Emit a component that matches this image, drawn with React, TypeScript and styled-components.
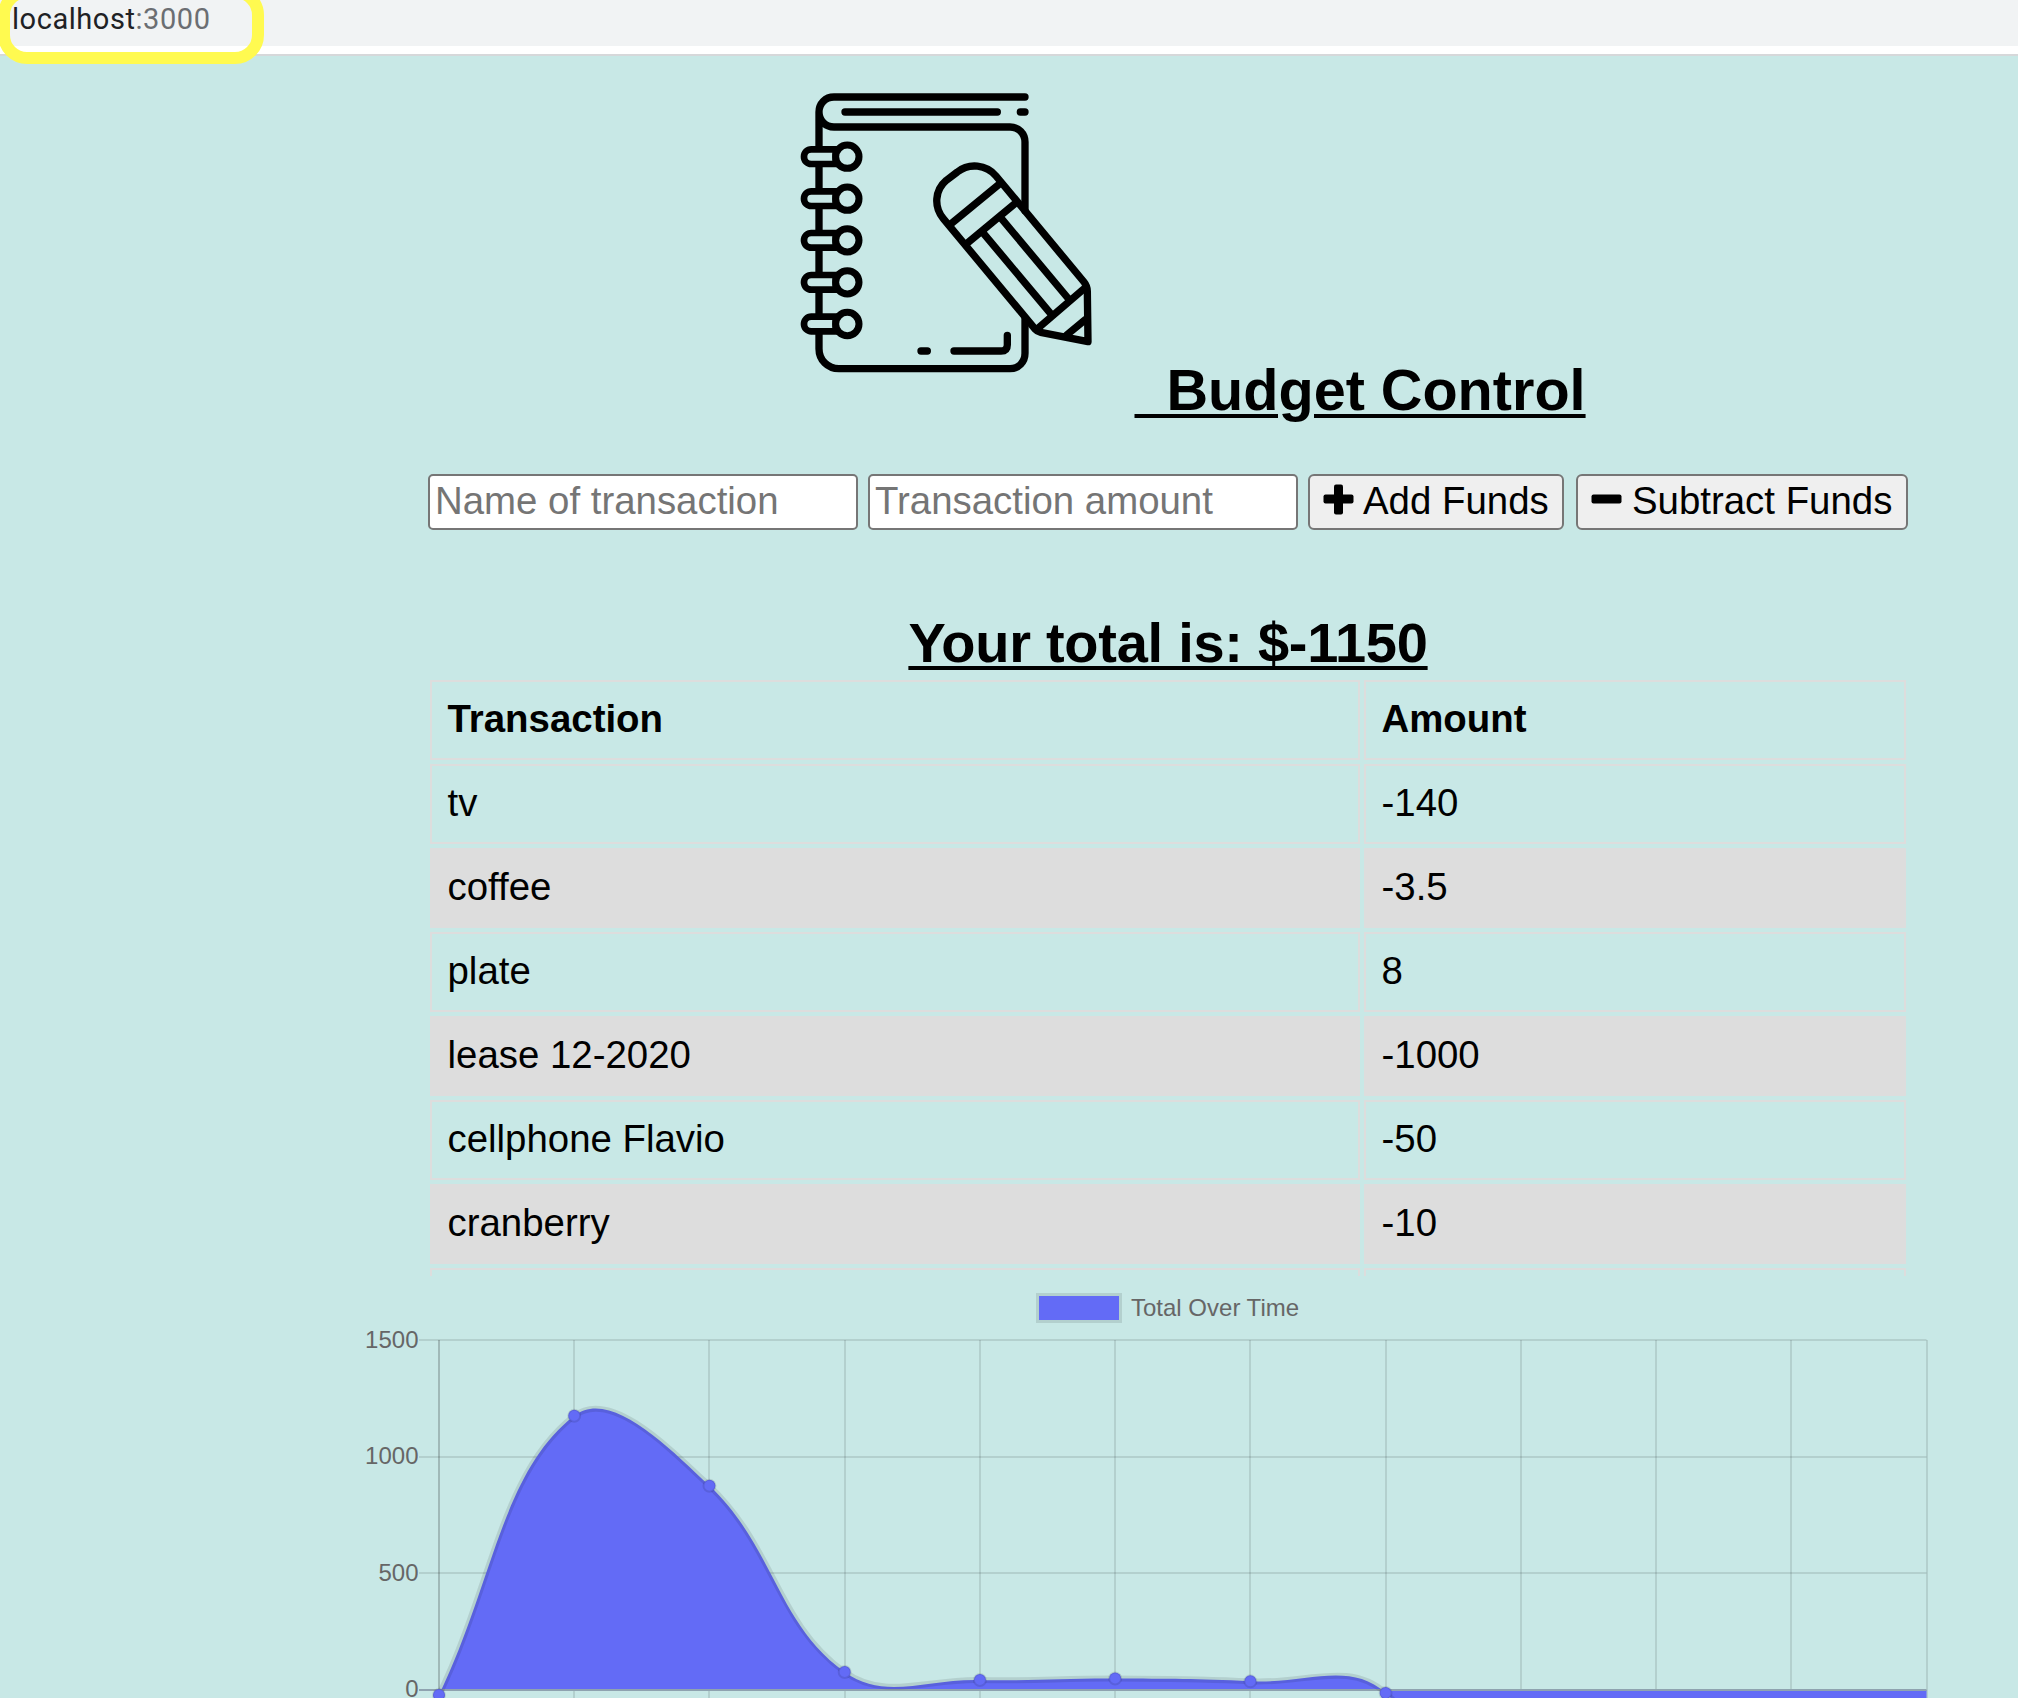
import React from "react";
import styled, { createGlobalStyle } from "styled-components";

const Global = createGlobalStyle`
  html, body { margin: 0; padding: 0; background: #c8e8e6; overflow: hidden; }
  * { box-sizing: border-box; }
`;

const Page = styled.div`
  width: 2018px;
  height: 1698px;
  overflow: hidden;
  background: #c8e8e6;
  color: #000;
  font-family: "Liberation Sans", Arial, Helvetica, sans-serif;
  font-size: 38.4px;
  display: flex;
  flex-direction: column;
`;

const BrowserBar = styled.div`
  position: relative;
  flex: none;
  height: 56px;
  background: #f1f3f4;
  border-bottom: 2px solid #d6d8da;
  box-shadow: inset 0 -8px 0 #fff;
`;

const Address = styled.div`
  padding: 2px 0 0 12px;
  font-family: Roboto, sans-serif;
  font-size: 29px;
  line-height: 34px;
  letter-spacing: 0.55px;
  color: #202124;
`;

const Port = styled.span`
  color: #6b6e72;
`;

const Highlight = styled.div`
  position: absolute;
  left: -2px;
  top: -14px;
  width: 266px;
  height: 78px;
  border: 12px solid #fffa50;
  border-radius: 29px;
`;

const Header = styled.header`
  flex: none;
  display: flex;
  align-items: flex-end;
  height: 369px;
  padding-left: 780px;
`;

const Logo = styled.svg`
  flex: none;
  width: 340px;
  height: 320px;
  margin-bottom: 35px;
`;

const Title = styled.h1`
  margin: 0 0 2px 14.5px;
  font-size: 57.6px;
  line-height: 66px;
  white-space: pre;
  text-decoration: underline;
  text-decoration-thickness: 4px;
  text-underline-offset: 4px;
`;

const Form = styled.form`
  flex: none;
  display: flex;
  height: 56px;
  margin: 49px 0 0 428px;
`;

const Field = styled.input`
  width: 430px;
  height: 56px;
  margin-right: 10px;
  padding: 0 4px 2px 5px;
  border: 2px solid #767676;
  border-radius: 5px;
  background: #fff;
  font: inherit;
  &::placeholder { color: #757575; opacity: 1; }
`;

const Button = styled.button<{ $width: number; $gap: number }>`
  display: flex;
  align-items: flex-start;
  gap: ${(p) => p.$gap}px;
  width: ${(p) => p.$width}px;
  height: 56px;
  margin-right: 12px;
  padding: 3px 0 0 13px;
  border: 2px solid #767676;
  border-radius: 6px;
  background: #efefef;
  color: #000;
  font: inherit;
  line-height: 44px;
  white-space: nowrap;
  svg { flex: none; margin-top: 5px; }
`;

const Total = styled.h2`
  flex: none;
  margin: 79px 0 0 428px;
  width: 1480px;
  height: 67px;
  font-size: 56px;
  line-height: 67px;
  letter-spacing: -0.27px;
  text-align: center;
  text-decoration: underline;
  text-decoration-thickness: 4px;
  text-underline-offset: 4px;
`;

const Scroller = styled.div`
  flex: none;
  width: 1484px;
  height: 600px;
  margin-left: 426px;
  overflow: hidden;
`;

const Table = styled.table`
  width: 1484px;
  table-layout: fixed;
  border-collapse: separate;
  border-spacing: 4px;
  text-align: left;
`;

const Row = styled.tr<{ $shaded?: boolean }>`
  background: ${(p) => (p.$shaded ? "#dddddd" : "transparent")};
`;

const Cell = styled.td<{ $width: number }>`
  width: ${(p) => p.$width}px;
  height: 80px;
  padding: 0 15.5px 2px;
  border: 2px solid #dddddd;
  line-height: 44px;
`;

const Chart = styled.svg`
  flex: none;
  display: block;
  width: 2018px;
  height: 422px;
`;

const rows: [string, string][] = [
  ["tv", "-140"],
  ["coffee", "-3.5"],
  ["plate", "8"],
  ["lease 12-2020", "-1000"],
  ["cellphone Flavio", "-50"],
  ["cranberry", "-10"],
  ["", ""],
];

function NotebookLogo() {
  return (
    <Logo viewBox="0 0 1020 960" fill="none" stroke="#000" strokeWidth={22} strokeLinecap="round" strokeLinejoin="round">
      <path d="M735 81H162C136 81 117 101 117 126S136 171 162 171H690C716 171 735 191 735 216V422M735 746V850C735 876 716 896 690 896H177C143 896 117 870 117 836V790M117 126V232" />
      <path d="M195 126H652M721 126H735M423 843H442M522 843H663Q682 843 682 824V796" />
      {[260, 386, 511, 637, 762].map((y, i) => (
        <g key={y}>
          {i < 4 && <path d={`M117 ${y + 30}V${y + 96}`} strokeLinecap="butt" />}
          <path d={`M176 ${y - 22}H94A22 22 0 0 0 94 ${y + 22}H176M167 ${y - 20}V${y + 20}`} strokeLinecap="butt" strokeWidth={20} />
          <circle cx={202} cy={y} r={35} strokeWidth={21} />
        </g>
      ))}
      <path d="M766 778L490 446C461 411 464 361 499 331L532 306C567 278 619 283 648 318L912 636Q922 648 922 664L924 815L782 787Q772 785 766 778Z" />
      <path d="M511 463L656 344M560 521L702 403M608 487L812 731M662 443L866 687M774 775L912 656M860 795L916 749" />
    </Logo>
  );
}

type Pt = { x: number; y: number };
const X0 = 439;
const STEP = 135.23;
const UNIT = 350 / 1500;
const ORIGIN = 414;
const totals = [-21, 1175, 875, 77, 43, 49, 37, -13, -1013, -1000, -1050, -1150];
const points: Pt[] = totals.map((v, i) => ({ x: X0 + i * STEP, y: ORIGIN - v * UNIT }));

function handles(i: number) {
  const cur = points[i];
  const prev = points[i - 1] ?? cur;
  const next = points[i + 1] ?? cur;
  const a = Math.hypot(cur.x - prev.x, cur.y - prev.y);
  const b = Math.hypot(next.x - cur.x, next.y - cur.y);
  const fa = (0.4 * a) / (a + b);
  const fb = (0.4 * b) / (a + b);
  const dx = next.x - prev.x;
  const dy = next.y - prev.y;
  return {
    before: { x: cur.x - fa * dx, y: cur.y - fa * dy },
    after: { x: cur.x + fb * dx, y: cur.y + fb * dy },
  };
}

const curve = points
  .map((p, i) => {
    if (i === 0) return `M${p.x} ${p.y}`;
    const c1 = handles(i - 1).after;
    const c2 = handles(i).before;
    return `C${c1.x} ${c1.y} ${c2.x} ${c2.y} ${p.x} ${p.y}`;
  })
  .join("");

function TotalChart() {
  const last = points[points.length - 1].x;
  return (
    <Chart viewBox="0 0 2018 422" fontFamily="Liberation Sans, Arial, sans-serif" fontSize={24} fill="#666">
      <rect x={1036} y={17} width={86} height={30} fill="rgba(0,0,0,0.1)" />
      <rect x={1039} y={20} width={80} height={24} fill="#636bf6" />
      <text x={1131} y={39.5}>Total Over Time</text>
      <g stroke="rgba(0,0,0,0.1)" strokeWidth={2}>
        {[64, 181, 297].map((y) => <path key={y} d={`M419 ${y}H${last}`} />)}
        {points.slice(1).map((p) => <path key={p.x} d={`M${Math.round(p.x)} 64V422`} />)}
      </g>
      <path d="M439 64V422" stroke="rgba(0,0,0,0.2)" strokeWidth={2} />
      {["1500", "1000", "500", "0"].map((label, i) => (
        <text key={label} x={418.5} y={72 + i * 116.3} textAnchor="end">{label}</text>
      ))}
      <path d={`${curve}V414H439Z`} fill="#636bf6" />
      <path d={`M419 414H${last}`} stroke="#8fa3b0" strokeWidth={2} />
      <path d={curve} fill="none" stroke="rgba(0,0,0,0.1)" strokeWidth={6} />
      {points.map((p) => (
        <circle key={p.x} cx={p.x} cy={p.y} r={6} fill="#636bf6" stroke="rgba(0,0,0,0.1)" strokeWidth={2} />
      ))}
    </Chart>
  );
}

export default function App() {
  return (
    <Page>
      <Global />
      <BrowserBar>
        <Address>localhost<Port>:3000</Port></Address>
        <Highlight />
      </BrowserBar>
      <Header>
        <NotebookLogo />
        <Title>{"\u00a0\u00a0Budget Control"}</Title>
      </Header>
      <Form>
        <Field placeholder="Name of transaction" />
        <Field placeholder="Transaction amount" />
        <Button type="button" $width={256} $gap={9}>
          <svg width="31" height="31" viewBox="0 0 31 31">
            <rect x="0.5" y="10.5" width="30" height="9" rx="2" />
            <rect x="11" y="0.5" width="9" height="30" rx="2" />
          </svg>
          Add Funds
        </Button>
        <Button type="button" $width={332} $gap={10}>
          <svg width="31" height="31" viewBox="0 0 31 31">
            <rect x="0.5" y="10.5" width="30" height="9" rx="2" />
          </svg>
          Subtract Funds
        </Button>
      </Form>
      <Total>Your total is: $-1150</Total>
      <Scroller>
        <Table>
          <thead>
            <Row>
              <Cell as="th" $width={930}>Transaction</Cell>
              <Cell as="th" $width={542}>Amount</Cell>
            </Row>
          </thead>
          <tbody>
            {rows.map(([name, amount], i) => (
              <Row key={i} $shaded={i % 2 === 1}>
                <Cell $width={930}>{name}</Cell>
                <Cell $width={542}>{amount}</Cell>
              </Row>
            ))}
          </tbody>
        </Table>
      </Scroller>
      <TotalChart />
    </Page>
  );
}
